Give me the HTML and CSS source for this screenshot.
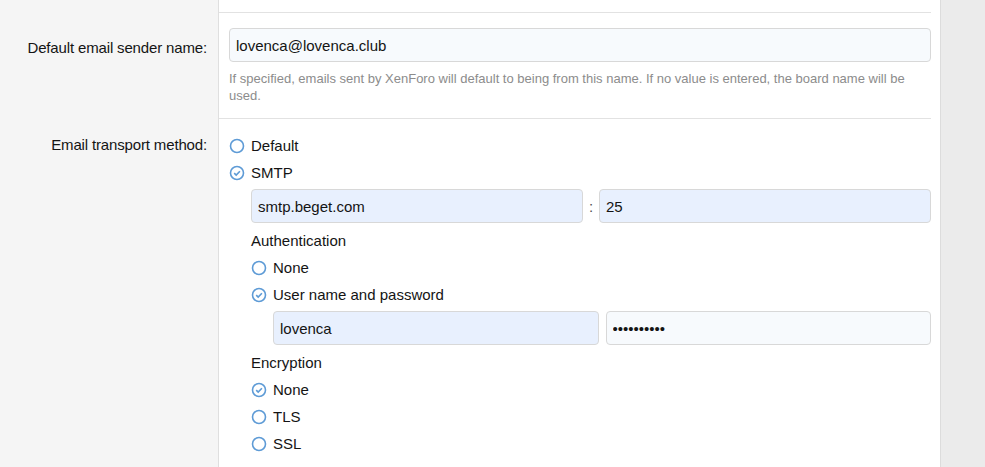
FILE: index.html
```html
<!DOCTYPE html>
<html>
<head>
    <title>Email options</title>
    <link rel="stylesheet" href="styles.css">
</head>
<body>
    <div class="block">
        <div class="form-row form-row--prev">
            <div class="row-label"></div>
            <div class="row-input"></div>
        </div>

        <div class="form-row">
            <div class="row-label">Default email sender name:</div>
            <div class="row-input">
                <input class="input" type="text" value="lovenca@lovenca.club">
                <div class="hint">If specified, emails sent by XenForo will default to being from this name. If no value is entered, the board name will be used.</div>
            </div>
        </div>

        <div class="form-row form-row--radio">
            <div class="row-label">Email transport method:</div>
            <div class="row-input">
                <label class="radio">
                    <svg viewBox="0 0 16 16"><circle cx="8" cy="8" r="6.5"/></svg>
                    Default
                </label>
                <label class="radio">
                    <svg viewBox="0 0 16 16"><circle cx="8" cy="8" r="6.5"/><path d="M5.2 8.1 L7.2 10.1 L10.9 6.2"/></svg>
                    SMTP
                </label>
                <div class="dependent">
                    <div class="input-pair">
                        <input class="input input--autofill" type="text" value="smtp.beget.com">
                        <span class="colon">:</span>
                        <input class="input input--autofill" type="text" value="25">
                    </div>

                    <div class="sub-title">Authentication</div>
                    <label class="radio">
                        <svg viewBox="0 0 16 16"><circle cx="8" cy="8" r="6.5"/></svg>
                        None
                    </label>
                    <label class="radio">
                        <svg viewBox="0 0 16 16"><circle cx="8" cy="8" r="6.5"/><path d="M5.2 8.1 L7.2 10.1 L10.9 6.2"/></svg>
                        User name and password
                    </label>
                    <div class="dependent">
                        <div class="input-pair input-pair--login">
                            <input class="input input--autofill" type="text" value="lovenca">
                            <input class="input" id="password" type="password" value="secretpass" autofocus>
                        </div>
                    </div>

                    <div class="sub-title">Encryption</div>
                    <label class="radio">
                        <svg viewBox="0 0 16 16"><circle cx="8" cy="8" r="6.5"/><path d="M5.2 8.1 L7.2 10.1 L10.9 6.2"/></svg>
                        None
                    </label>
                    <label class="radio">
                        <svg viewBox="0 0 16 16"><circle cx="8" cy="8" r="6.5"/></svg>
                        TLS
                    </label>
                    <label class="radio">
                        <svg viewBox="0 0 16 16"><circle cx="8" cy="8" r="6.5"/></svg>
                        SSL
                    </label>
                </div>
            </div>
        </div>
    </div>

    <script>
        const pw = document.getElementById('password');
        pw.focus();
        pw.setSelectionRange(pw.value.length, pw.value.length);
    </script>
</body>
</html>
```

FILE: styles.css
```css
body {
    margin: 0;
    background: #ebebeb;
    font-family: "Liberation Sans", Arial, sans-serif;
    font-size: 15px;
    color: #141414;
    height: 467px;
    overflow: hidden;
}

.block {
    width: 941px;
    min-height: 467px;
    background: #fff;
    border-right: 1px solid #dcdcdc;
    box-sizing: border-box;
}

.form-row {
    display: flex;
}

.row-label {
    width: 219px;
    flex-shrink: 0;
    box-sizing: border-box;
    background: #f5f5f5;
    border-right: 1px solid #dfdfdf;
    text-align: right;
    padding: 25px 11px 0 0;
    line-height: 20px;
    letter-spacing: -0.15px;
}

.row-input {
    flex: 1;
    margin-right: 9px;
    padding: 15px 0 14px 10px;
    border-bottom: 1px solid #e2e2e2;
}

.form-row--prev .row-input {
    height: 12px;
    padding: 0;
}

.form-row--prev .row-label {
    padding: 0;
}

.form-row--radio .row-label {
    padding-top: 16px;
}

.form-row--radio .row-input {
    padding-top: 13px;
    border-bottom: none;
}

.input {
    display: block;
    width: 100%;
    box-sizing: border-box;
    height: 34px;
    padding: 0 6px;
    border: 1px solid #d8d8d8;
    border-radius: 4px;
    background: #f7fafd;
    font-family: inherit;
    font-size: 15px;
    color: #141414;
    outline: none;
    caret-color: #000;
}

.input--autofill {
    background: #e8f0fe;
}

.hint {
    margin-top: 8px;
    font-size: 13px;
    line-height: 17px;
    color: #8c8c8c;
}

.radio {
    display: flex;
    align-items: center;
    height: 27px;
}

.radio svg {
    width: 16px;
    height: 16px;
    margin-right: 6px;
    fill: none;
    stroke: #5e9bd6;
    stroke-width: 1.6;
}

.dependent {
    padding-left: 22px;
}

.input-pair {
    display: flex;
    align-items: center;
    margin: 3px 0 5px;
}

.input-pair .input {
    flex: 1;
}

.colon {
    width: 16px;
    text-align: center;
    color: #505050;
}

.input-pair--login {
    gap: 7px;
}

.sub-title {
    height: 26px;
    line-height: 26px;
}
```
